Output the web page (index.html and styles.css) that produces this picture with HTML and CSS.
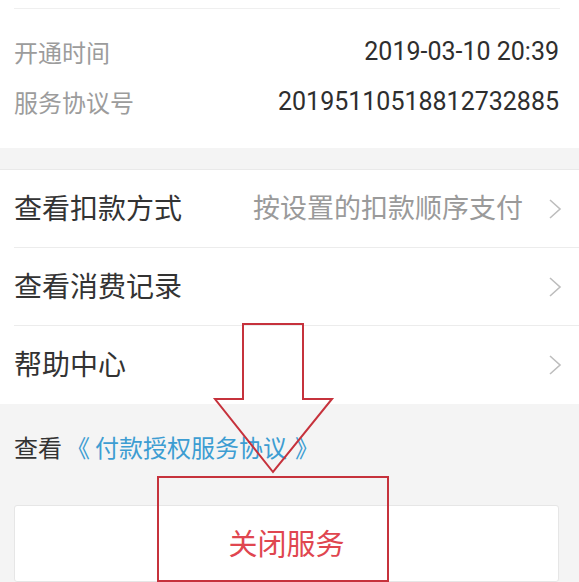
FILE: index.html
```html
<!DOCTYPE html>
<html lang="zh-CN">
<head>
<meta charset="utf-8">
<title>服务详情</title>
<link rel="stylesheet" href="styles.css">
</head>
<body>
<div class="page">
  <section class="info">
    <div class="prev-row"></div>
    <div class="info-rows">
      <div class="info-row"><span class="info-label">开通时间</span><span class="info-value">2019-03-10 20:39</span></div>
      <div class="info-row"><span class="info-label">服务协议号</span><span class="info-value">20195110518812732885</span></div>
    </div>
  </section>
  <div class="gap"></div>
  <section class="menu">
    <div class="menu-row">
      <span class="menu-label">查看扣款方式</span>
      <span class="menu-right"><span class="menu-value">按设置的扣款顺序支付</span><svg class="chev" viewBox="0 0 14 20" width="14" height="20"><polyline points="2,1 12,10 2,19" fill="none" stroke="#bdbdbd" stroke-width="1.6"/></svg></span>
    </div>
    <div class="menu-row">
      <span class="menu-label">查看消费记录</span>
      <span class="menu-right"><svg class="chev" viewBox="0 0 14 20" width="14" height="20"><polyline points="2,1 12,10 2,19" fill="none" stroke="#bdbdbd" stroke-width="1.6"/></svg></span>
    </div>
    <div class="menu-row">
      <span class="menu-label">帮助中心</span>
      <span class="menu-right"><svg class="chev" viewBox="0 0 14 20" width="14" height="20"><polyline points="2,1 12,10 2,19" fill="none" stroke="#bdbdbd" stroke-width="1.6"/></svg></span>
    </div>
  </section>
  <section class="footer">
    <p class="agreement">查看<span class="link"><span class="br-open">《</span>付款授权服务协议<span class="br-close">》</span></span></p>
    <div class="close-btn">关闭服务</div>
  </section>
  <svg class="annot" width="579" height="582" viewBox="0 0 579 582">
    <polygon points="243,324 303,324 303,399 332,399 273,472 215,399 243,399" fill="none" stroke="#c6323c" stroke-width="2"/>
    <rect x="158" y="477" width="230" height="104" fill="none" stroke="#c6323c" stroke-width="2"/>
  </svg>
</div>
</body>
</html>
```
FILE: styles.css
```css
html, body {
  margin: 0;
  padding: 0;
}
body {
  background: #f4f4f4;
  font-family: Roboto, "Noto Sans CJK SC", sans-serif;
  color: #333;
}
.page {
  position: relative;
  width: 579px;
  height: 582px;
  overflow: hidden;
}
.info {
  background: #fff;
  padding: 0 19px 22px 14px;
}
.prev-row {
  height: 8px;
  border-bottom: 1px solid #efefef;
}
.info-rows {
  padding-top: 17px;
}
.info-row {
  height: 50px;
  display: flex;
  align-items: center;
  justify-content: space-between;
}
.info-label {
  font-size: 24px;
  color: #9c9c9c;
}
.info-value {
  font-size: 25px;
  color: #2e2e2e;
  margin-right: 1px;
}
.gap {
  height: 21px;
  border-bottom: 1px solid #e9e9e9;
}
.menu {
  background: #fff;
  padding-left: 14px;
}
.menu-row {
  height: 77px;
  display: flex;
  align-items: center;
  justify-content: space-between;
  padding-right: 17px;
  border-bottom: 1px solid #ececec;
}
.menu-row:last-child {
  border-bottom: none;
  height: 78px;
}
.menu-label {
  font-size: 28px;
  color: #333;
  margin-top: -4px;
}
.menu-right {
  display: flex;
  align-items: center;
}
.menu-value {
  font-size: 27px;
  color: #9a9a9a;
  margin-right: 25px;
  margin-top: -4px;
}
.chev {
  display: block;
}
.footer {
  padding: 28px 20px 0 14px;
}
.agreement {
  margin: 0;
  font-size: 24px;
  line-height: 34px;
  color: #333;
}
.link {
  color: #3d9dd2;
  margin-left: 4px;
}
.br-open {
  margin-right: 5px;
}
.br-close {
  margin-left: 8px;
}
.close-btn {
  margin-top: 39px;
  height: 77px;
  box-sizing: border-box;
  padding-bottom: 4px;
  background: #fff;
  border: 1px solid #e6e6e6;
  border-radius: 3px;
  display: flex;
  align-items: center;
  justify-content: center;
  font-size: 29px;
  color: #e0464f;
}
.annot {
  position: absolute;
  left: 0;
  top: 0;
  pointer-events: none;
}
```
